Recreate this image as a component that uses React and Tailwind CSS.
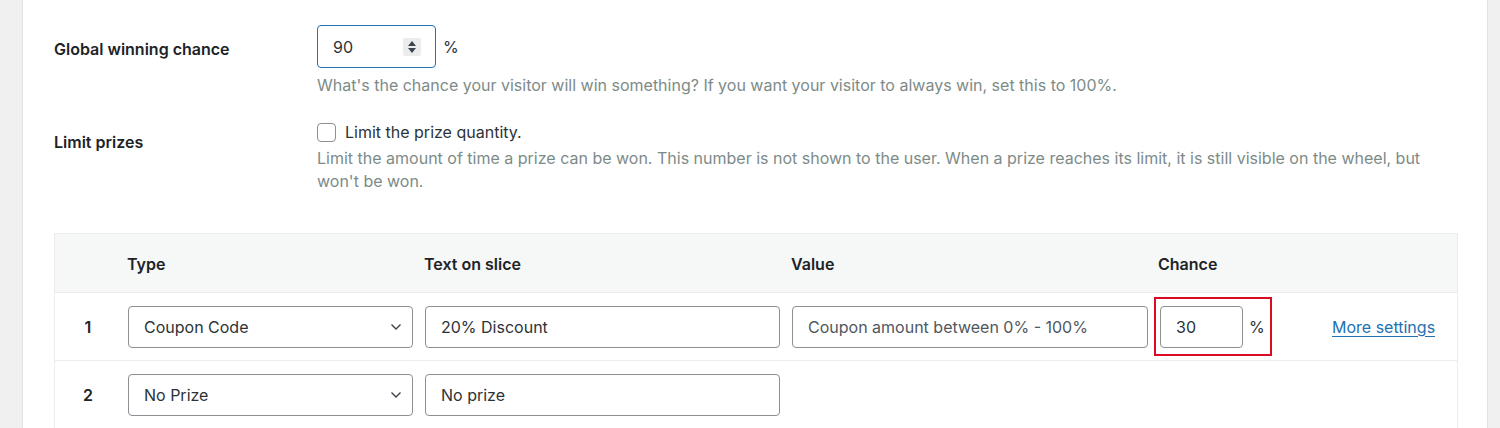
import React from "react";

const font = { fontFamily: "Inter, 'Open Sans', sans-serif" };

function Chevron() {
  return (
    <svg width="12" height="8" viewBox="0 0 12 8" className="text-[#3c434a]">
      <polyline points="1.5,1.5 6,6 10.5,1.5" fill="none" stroke="currentColor" strokeWidth="1.4" />
    </svg>
  );
}

function Select({ label }) {
  return (
    <div className="ml-[7px] flex h-[42px] w-[285px] items-center justify-between rounded-[4px] border border-[#8c8f94] bg-white pl-[15px] pr-[10px] text-[#2c3338]">
      <span>{label}</span>
      <Chevron />
    </div>
  );
}

function TextBox({ value, className = "", muted }) {
  return (
    <div
      className={`flex h-[42px] items-center rounded-[4px] border border-[#8c8f94] bg-white px-[15px] ${
        muted ? "text-[#50575e]" : "text-[#2c3338]"
      } ${className}`}
    >
      {value}
    </div>
  );
}

function Spinner() {
  return (
    <div className="flex h-[18px] w-[18px] flex-col items-center justify-center gap-[2px] rounded-[2px] bg-[#ececec]">
      <svg width="8" height="5" viewBox="0 0 8 5">
        <polygon points="4,0 8,5 0,5" fill="#3c434a" />
      </svg>
      <svg width="8" height="5" viewBox="0 0 8 5">
        <polygon points="0,0 8,0 4,5" fill="#3c434a" />
      </svg>
    </div>
  );
}

export default function App() {
  return (
    <div className="flex h-[428px] w-[1500px] overflow-hidden bg-[#f0f0f1] text-[16px]" style={font}>
      <div className="w-[22px] shrink-0" />
      <div className="w-[1466px] shrink-0 border-x border-[#e2e2e4] bg-white pl-[31px]">
        {/* settings rows */}
        <div className="flex pt-[25px]">
          <div className="w-[263px] pt-[12px] font-semibold text-[#1d2327]">Global winning chance</div>
          <div>
            <div className="flex items-center">
              <div className="flex h-[43px] w-[119px] items-center justify-between rounded-[4px] border border-[#2271b1] bg-white pl-[15px] pr-[14px] text-[#2c3338]">
                <span>90</span>
                <Spinner />
              </div>
              <span className="ml-[7px] text-[#2c3338]">%</span>
            </div>
            <p className="mt-[6px] leading-[23px] text-[#7d8b88]">
              What's the chance your visitor will win something? If you want your visitor to always win, set this to 100%.
            </p>
          </div>
        </div>

        <div className="mt-[23px] flex">
          <div className="w-[263px] pt-[10px] font-semibold text-[#1d2327]">Limit prizes</div>
          <div className="w-[1130px]">
            <label className="flex items-center">
              <span className="h-[19px] w-[19px] rounded-[4px] border border-[#8c8f94] bg-white" />
              <span className="ml-[9px] text-[#2c3338]">Limit the prize quantity.</span>
            </label>
            <p className="mt-[3px] leading-[23px] text-[#7d8b88]">
              Limit the amount of time a prize can be won. This number is not shown to the user. When a prize reaches its limit, it is still visible on the wheel, but won't be won.
            </p>
          </div>
        </div>

        {/* prizes table */}
        <div className="mt-[40px] w-[1404px] border border-b-0 border-[#ececec]">
          <div className="flex h-[58px] items-center bg-[#f6f7f7] pt-[2px] font-semibold text-[#1d2327]">
            <div className="w-[72px]" />
            <div className="w-[297px]">Type</div>
            <div className="w-[367px]">Text on slice</div>
            <div className="w-[367px]">Value</div>
            <div>Chance</div>
          </div>

          <div className="flex h-[68px] items-center border-t border-[#ececec]">
            <div className="w-[66px] text-center font-semibold text-[#1d2327]">1</div>
            <Select label="Coupon Code" />
            <TextBox value="20% Discount" className="ml-3 w-[355px]" />
            <TextBox value="Coupon amount between 0% - 100%" className="ml-3 w-[356px]" muted />
            <div className="ml-[6px] flex h-[59px] w-[118px] items-center border-2 border-[#dc0a22] pl-[4px]">
              <TextBox value="30" className="w-[83px]" />
              <span className="ml-[6px] text-[#2c3338]">%</span>
            </div>
            <a href="#" className="ml-[60px] text-[#2271b1] underline underline-offset-[3px]">
              More settings
            </a>
          </div>

          <div className="flex h-[68px] items-center border-t border-[#ececec]">
            <div className="w-[66px] text-center font-semibold text-[#1d2327]">2</div>
            <Select label="No Prize" />
            <TextBox value="No prize" className="ml-3 w-[355px]" />
          </div>
        </div>
      </div>
    </div>
  );
}
